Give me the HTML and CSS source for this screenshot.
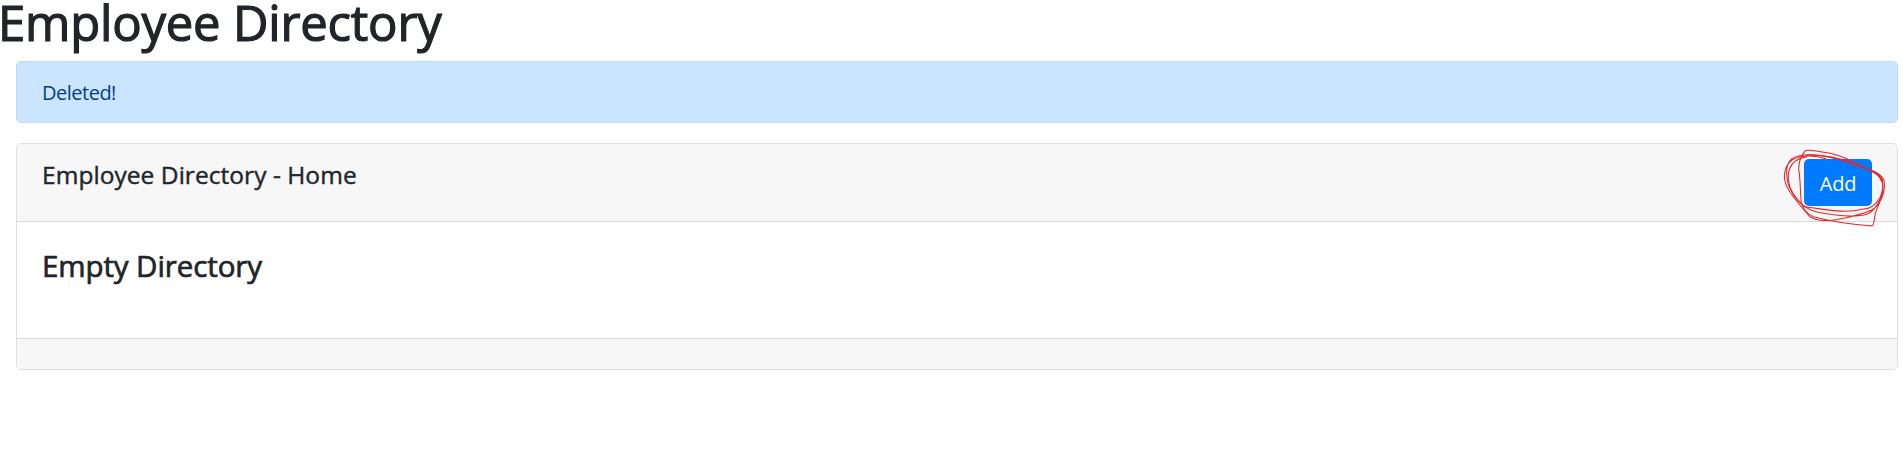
FILE: index.html
```html
<!DOCTYPE html>
<html lang="en">
<head>
<meta charset="utf-8">
<title>Employee Directory</title>
<link rel="stylesheet" href="styles.css">
</head>
<body>
<h1 class="page-title">Employee Directory</h1>
<main class="content">
  <div class="alert" role="alert"><span class="alert-text">Deleted!</span></div>
  <section class="card">
    <header class="card-header">
      <h5 class="card-title">Employee Directory - Home</h5>
      <div class="action">
        <button class="btn" type="button"><span class="btn-text">Add</span></button>
        <svg class="scribble" viewBox="0 0 399 285" aria-hidden="true">
          <path d="M168 56C130 44 90 46 66 60C44 76 38 108 48 134C60 164 90 196 116 226C134 246 180 244 226 234C270 222 306 218 326 192C340 168 346 140 342 120C328 94 290 86 262 76C200 46 100 34 66 56C44 72 48 112 58 142C72 172 100 206 140 216C190 226 250 236 292 222C318 210 332 180 342 150"/>
          <path d="M110 46C160 42 210 56 262 78C300 88 334 100 338 124C344 160 326 190 316 220L311 250Q309 260 298 257C240 252 180 244 130 230C110 220 102 210 94 190C90 150 92 120 86 88C86 62 96 44 106 32C116 26 150 34 190 42C220 50 270 74 302 92C326 104 340 120 338 142C336 182 306 206 280 207C220 222 170 208 102 200C80 180 58 150 55 120C52 80 70 56 112 50"/>
        </svg>
      </div>
    </header>
    <div class="card-body"><h4 class="empty-title">Empty Directory</h4></div>
    <footer class="card-footer"></footer>
  </section>
</main>
</body>
</html>
```
FILE: styles.css
```css
* { box-sizing: border-box; }
body { margin: 0; background: #fff; color: #212529; font-family: "Open Sans", "Noto Sans", sans-serif; font-size: 20px; line-height: 30px; }
h1, h4, h5 { margin: 0; font-weight: 500; white-space: nowrap; }
.page-title { height: 61px; margin-left: -2px; font-size: 49px; line-height: 45px; letter-spacing: -0.2px; -webkit-text-stroke: 1.2px #212529; }
.content { margin: 0 5px 0 16px; }
.alert { height: 62px; margin-bottom: 20px; padding: 16px 25px 14px; border: 1px solid #b8daff; border-radius: 5px; background: #cce5ff; color: #004085; letter-spacing: -0.5px; }
.card { border: 1px solid #dfdfdf; border-radius: 5px; overflow: hidden; }
.card-header { display: flex; justify-content: space-between; height: 78px; padding: 15px 25px; background: #f7f7f7; border-bottom: 1px solid #d9d9d9; }
.card-title { font-size: 24.5px; line-height: 31px; letter-spacing: 0.05px; -webkit-text-stroke: 0.4px #212529; }
.action { position: relative; width: 68px; height: 47px; }
.btn { display: block; width: 68px; height: 47px; padding: 2px 0 0; border: 0; border-radius: 5px; background: #007bff; color: #fff; font: 20px/45px "Open Sans", "Noto Sans", sans-serif; letter-spacing: -0.2px; }
.scribble { position: absolute; left: -34px; top: -19px; width: 133px; height: 95px; overflow: visible; fill: none; stroke: #e5262b; stroke-width: 3.2; stroke-linejoin: round; pointer-events: none; }
.card-body { height: 116px; padding: 26px 25px 24px; }
.empty-title { font-size: 29.5px; line-height: 36px; letter-spacing: -0.1px; -webkit-text-stroke: 0.7px #212529; }
.card-footer { height: 31px; background: #f7f7f7; border-top: 1px solid #d9d9d9; }
```
